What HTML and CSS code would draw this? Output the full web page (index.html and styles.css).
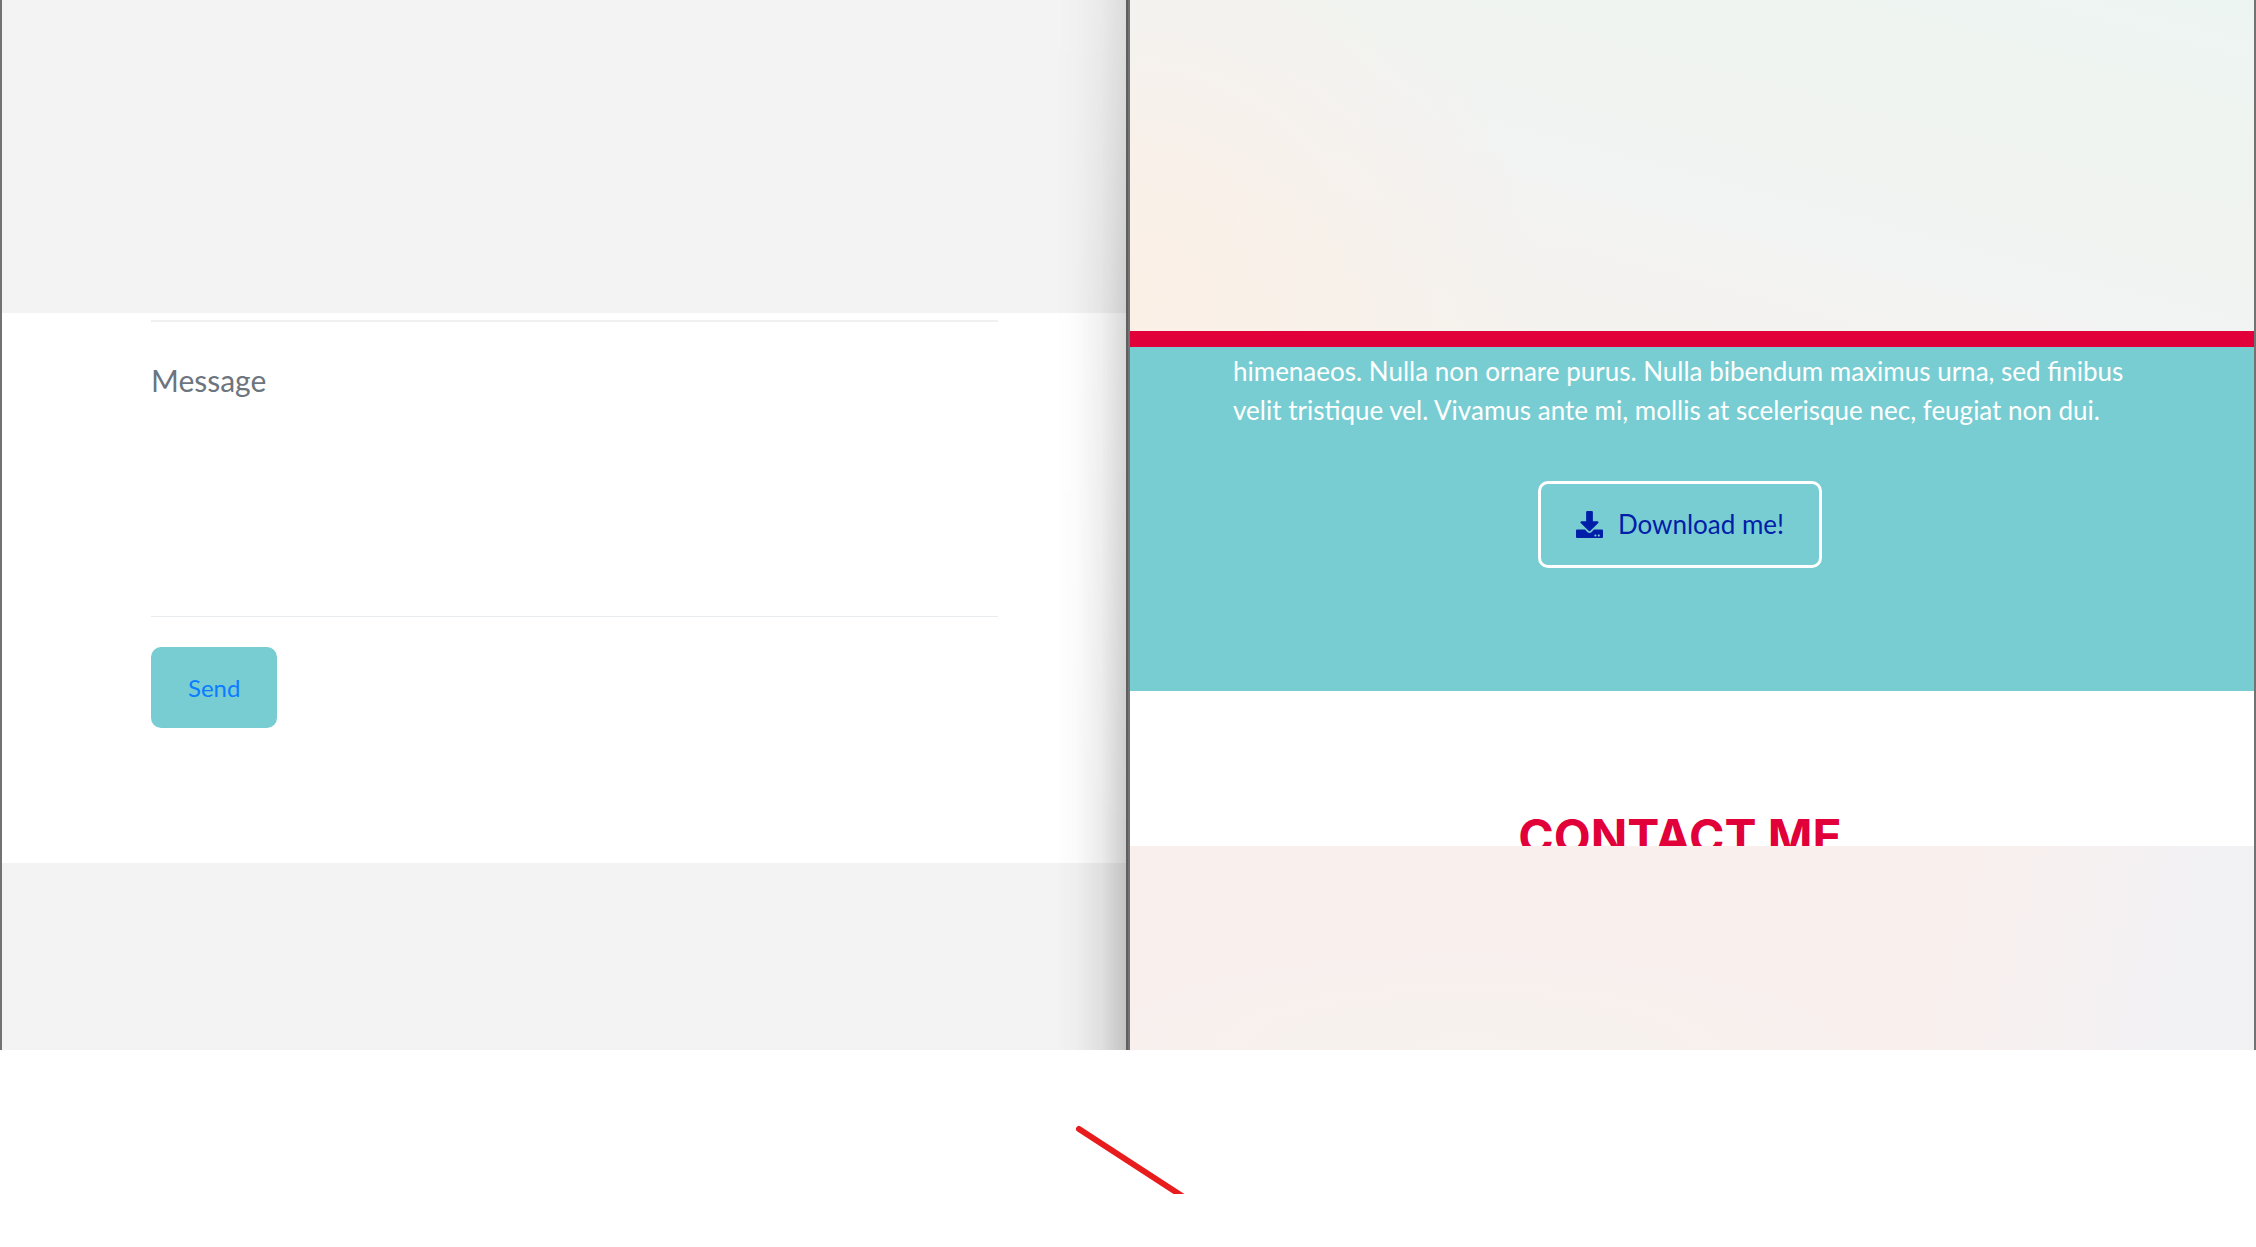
FILE: index.html
```html
<!DOCTYPE html>
<html lang="en">
<head>
<meta charset="utf-8">
<title>Contact</title>
<link rel="stylesheet" href="styles.css">
</head>
<body>
<main class="windows">
  <section class="window window-form">
    <div class="backdrop backdrop-form-top"></div>
    <form class="contact-form">
      <textarea class="message" aria-label="Message" placeholder="Message"></textarea>
      <button class="button button-send" type="button">Send</button>
    </form>
    <div class="backdrop backdrop-rest"></div>
  </section>
  <section class="window window-page">
    <div class="backdrop backdrop-page-top"></div>
    <div class="about">
      <p class="about-text">himenaeos. Nulla non ornare purus. Nulla bibendum maximus urna, sed finibus<br>velit tristique vel. Vivamus ante mi, mollis at scelerisque nec, feugiat non dui.</p>
      <a class="button button-download" href="#">
        <svg class="icon" viewBox="0 0 512 512" aria-hidden="true"><path fill="currentColor" d="M216 0h80c13.300 0 24 10.700 24 24v168h87.700c17.800 0 26.700 21.500 14.100 34.100L269.700 378.300c-7.500 7.500-19.800 7.500-27.300 0L90.100 226.100c-12.600-12.600-3.700-34.100 14.100-34.100H192V24c0-13.300 10.700-24 24-24zm296 376v112c0 13.300-10.700 24-24 24H24c-13.300 0-24-10.700-24-24V376c0-13.300 10.700-24 24-24h146.700l49 49c20.100 20.100 52.500 20.100 72.600 0l49-49H488c13.300 0 24 10.700 24 24zm-124 88c0-11-9-20-20-20s-20 9-20 20 9 20 20 20 20-9 20-20zm64 0c0-11-9-20-20-20s-20 9-20 20 9 20 20 20 20-9 20-20z"/></svg>
        <span>Download me!</span>
      </a>
    </div>
    <div class="contact">
      <h2 class="contact-title">CONTACT ME</h2>
    </div>
    <div class="backdrop backdrop-page-bottom"></div>
  </section>
</main>
<svg class="stroke" viewBox="0 0 112 70" aria-hidden="true"><path d="M7 5L124 81" fill="none" stroke="#e81c1c" stroke-width="6" stroke-linecap="round"/></svg>
</body>
</html>
```
FILE: styles.css
```css
* {
  box-sizing: border-box;
}

body {
  margin: 0;
  background: #fff;
  font-family: Lato, "Liberation Sans", sans-serif;
  font-size: 26px;
  line-height: 39px;
}

.windows {
  display: grid;
  grid-template-columns: 1fr 1fr;
  min-height: 1050px;
}

.window {
  display: flex;
  flex-direction: column;
  border: solid #727272;
  border-width: 0 2px;
  background: #fff;
}

.window-form {
  position: relative;
  border-right-color: #5f5f5f;
}

/* Shadow that the right window casts, deeper towards the bottom */
.window-form::after {
  content: "";
  position: absolute;
  top: 0;
  right: 0;
  bottom: 0;
  width: 70px;
  background: linear-gradient(to right, transparent, rgba(0, 0, 0, 0.02) 30%, rgba(0, 0, 0, 0.08) 65%, rgba(0, 0, 0, 0.2));
  mask-image: linear-gradient(rgba(0, 0, 0, 0.45), rgba(0, 0, 0, 0.75) 30%, #000 80%);
  pointer-events: none;
}

.backdrop {
  background: #f3f3f3;
}

.backdrop-form-top {
  height: 313px;
}

.backdrop-rest {
  flex: 1;
}

.contact-form {
  padding: 7px 128px 135px 149px;
}

.message {
  display: block;
  width: 100%;
  height: 297px;
  margin-bottom: 30px;
  padding: 34px 0 0;
  border: solid #e9ecef;
  border-width: 2px 0 1px;
  border-top-color: #f0f0f1;
  outline: none;
  resize: none;
  background: transparent;
  color: #212529;
  font: 30px/48px Lato, sans-serif;
}

.message::placeholder {
  color: #6c757d;
  opacity: 1;
}

.button {
  border-radius: 10px;
}

.button-send {
  display: block;
  padding: 21px 37px;
  border: 0;
  background: #78cdd2;
  color: #0a7cff;
  font: 24px/39px Lato, sans-serif;
}

.backdrop-page-top {
  height: 331px;
  background:
    radial-gradient(circle at 0 90%, #fbf0e6, rgba(251, 240, 230, 0) 35%),
    linear-gradient(15deg, #f6f2ec, #f2f3f3 45%, #f0f4f0 70%, #edf5f3);
}

.about {
  display: flex;
  flex-direction: column;
  align-items: center;
  padding: 5px 127px 123px 103px;
  border-top: 16px solid #e1003a;
  background: #78cdd2;
}

.about-text {
  align-self: stretch;
  margin: 0 0 51px;
  color: #fff;
  white-space: nowrap;
}

.button-download {
  display: flex;
  align-items: center;
  gap: 15px;
  padding: 21px 35px;
  border: 3px solid #fff;
  color: #001ea8;
  text-decoration: none;
}

.icon {
  width: 27px;
  height: 27px;
}

.contact {
  height: 155px;
  padding: 116px 127px 0 103px;
  overflow: hidden;
  background: #fff;
}

.contact-title {
  margin: 0;
  color: #e1003a;
  font: 700 48px/60px Inter, sans-serif;
  text-align: center;
}

.backdrop-page-bottom {
  flex: 1;
  background:
    linear-gradient(105deg, rgba(242, 241, 244, 0) 72%, #f2f1f4 92%),
    radial-gradient(ellipse at 30% 100%, #f6f2ed, rgba(246, 242, 237, 0) 35%),
    #f9f0ee;
}

.stroke {
  display: block;
  width: 112px;
  height: 70px;
  margin: 74px auto 0;
}
```
